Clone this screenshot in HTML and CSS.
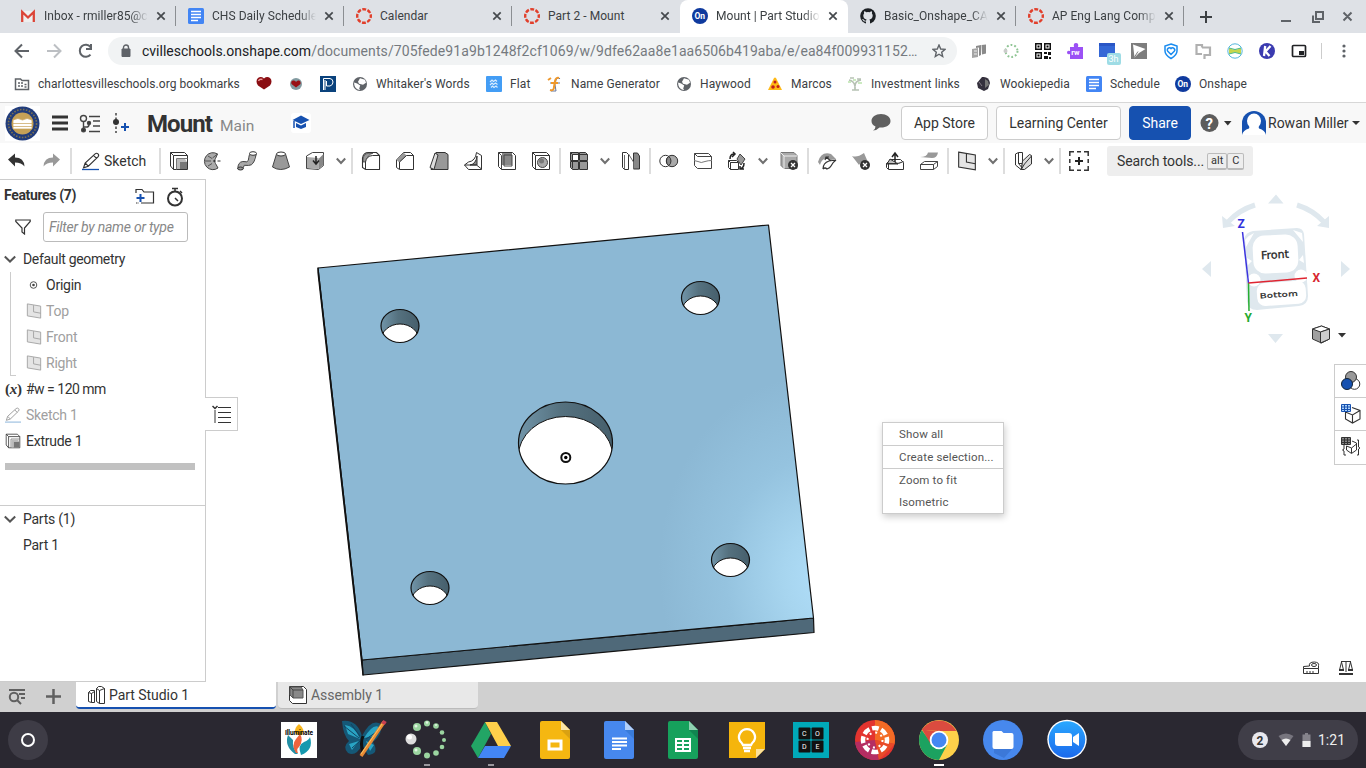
FILE: index.html
```html
<!DOCTYPE html>
<html lang="en">
<head>
<meta charset="utf-8">
<title>Mount | Part Studio 1</title>
<link rel="stylesheet" href="styles.css">
</head>
<body>
<svg class="defs" width="0" height="0">
  <defs>
    <symbol id="x" viewBox="0 0 10 10"><path d="M1.3 1.3l7.4 7.4M8.7 1.3L1.3 8.7" stroke="#45494d" stroke-width="1.7"/></symbol>
    <symbol id="canvas" viewBox="0 0 16 16"><circle cx="8" cy="8" r="6.800" fill="none" stroke="#e13f2b" stroke-width="2.400" stroke-dasharray="3.900 1.440" stroke-dashoffset="1.950"/></symbol>
    <symbol id="docs" viewBox="0 0 16 16"><rect width="16" height="16" rx="1.5" fill="#4285f4"/><path d="M3 4h10M3 7h10M3 10h10M3 13h7" transform="translate(0 -.5)" stroke="#fff" stroke-width="1.7"/></symbol>
    <symbol id="on" viewBox="0 0 16 16"><circle cx="8" cy="8" r="8" fill="#0f3a9e"/><text x="2.400" y="11" font-size="8.500" font-weight="bold" fill="#fff">On</text></symbol>
    <symbol id="globe" viewBox="0 0 16 16"><circle cx="8" cy="8" r="7" fill="#5f6368"/><path d="M2.200 6.500l3 1 3 2-1 3 1 1.500C5 14 1.700 11 2.200 6.500M8 2.200l5 1.500 1 3-3 2-4-1-1-2z" fill="#fff"/></symbol>
    <symbol id="chev" viewBox="0 0 10 8"><path d="M.8 1.500L5 6l4.200-4.500" fill="none" stroke="#707070" stroke-width="2"/></symbol>
    <symbol id="plane" viewBox="0 0 18 18"><path d="M1.500 1l15 2.500v13.500l-15-2.500z" fill="#e4e4e4" stroke="currentColor"/><path d="M8.500 2.500v7.500l8 1.500" fill="none" stroke="currentColor"/></symbol>
    <symbol id="pencil" viewBox="0 0 18 18"><path d="M1.500 15l1.500-4.500L12.500 1.800q1.400-1.200 2.700 0t0 2.800L6 13.500zM3 10.500l3 3M11 3.300l2.800 2.800" fill="none" stroke="currentColor" stroke-width="1.100"/></symbol>
    <symbol id="extrude" viewBox="0 0 20 20"><path d="M1.500 4V1.500h14l3 3v14H4.500L1.500 15z" fill="#fff" stroke="#333"/><path d="M1.500 1.500l3 3v14M4.500 4.500h14" fill="none" stroke="#333"/><path d="M7.500 7.500v11M7.500 7.500h11" stroke="#777"/><path d="M8 8l3 3v7H8zM8 8h8l2 3h-7z" fill="#bbb"/><path d="M11 11h7v7h-7z" fill="#777"/></symbol>
    <symbol id="box" viewBox="0 0 20 20"><path d="M1.500 16.500V7q1-5.500 6-5.500h8l3 3v14h-14z" fill="#fff" stroke="#333" stroke-width="1.100"/></symbol>
  </defs>
</svg>

<div class="tabs">
  <div class="tab"><svg width="16" height="16"><path d="M1 3h14v11H1z" fill="#eee"/><path d="M2.200 14V4L8 9.500 13.800 4v10" fill="none" stroke="#db4437" stroke-width="2.300"/></svg><span class="ttl fade">Inbox - rmiller85@c</span><svg class="cl"><use href="#x"/></svg></div>
  <div class="tab"><svg width="16" height="16"><use href="#docs"/></svg><span class="ttl fade">CHS Daily Schedule</span><svg class="cl"><use href="#x"/></svg></div>
  <div class="tab"><svg width="16" height="16"><use href="#canvas"/></svg><span class="ttl">Calendar</span><svg class="cl"><use href="#x"/></svg></div>
  <div class="tab nosep"><svg width="16" height="16"><use href="#canvas"/></svg><span class="ttl">Part 2 - Mount</span><svg class="cl"><use href="#x"/></svg></div>
  <div class="tab active nosep"><svg width="16" height="16"><use href="#on"/></svg><span class="ttl fade">Mount | Part Studio</span><svg class="cl"><use href="#x"/></svg></div>
  <div class="tab"><svg width="16" height="16"><circle cx="8" cy="8" r="7.800" fill="#1b1f23"/><path d="M6 16v-2.500q-2.500.5-3.200-1.500l-1-1q2 0 2.500 1.200.7.800 1.800.3l.5-1Q3.300 11 3.300 7.500q0-1.200.8-2-.4-1 .1-2.200 1 0 2.100.9a7 7 0 0 1 3.400 0q1-.9 2.100-.9.500 1.200.1 2.200.8.800.8 2 0 3.500-3.300 4 .6.500.6 1.500v3z" fill="#dee1e6"/></svg><span class="ttl fade">Basic_Onshape_CA</span><svg class="cl"><use href="#x"/></svg></div>
  <div class="tab"><svg width="16" height="16"><use href="#canvas"/></svg><span class="ttl fade">AP Eng Lang Comp</span><svg class="cl"><use href="#x"/></svg></div>
  <svg class="plus" width="12" height="12"><path d="M6 0v12M0 6h12" stroke="#3c4043" stroke-width="2"/></svg>
  <svg class="wins" width="90" height="20"><g fill="none" stroke="#5f6368" stroke-width="2"><path d="M0 14h10M35 5h7v7h-7zM32 8.500V15h7M62.500 5.500l8 8M70.500 5.500l-8 8" /></g></svg>
</div>

<div class="addr">
  <svg class="nav" width="90" height="18" fill="none" stroke-width="2"><path d="M16 9H3M9 2.500L2.500 9 9 15.500" stroke="#5f6368"/><path d="M34 9h13M41 2.500L47.500 9 41 15.500" stroke="#bcbfc3"/><path d="M77.500 12.500A6 6 0 1 1 77.500 5M78 2v5h-5" stroke="#5f6368"/></svg>
  <div class="omni"><svg width="10" height="14"><path d="M1 5h8v7.500H1z" fill="#5f6368" stroke="#5f6368"/><path d="M2.500 5V3.500a2.500 2.500 0 0 1 5 0V5" fill="none" stroke="#5f6368" stroke-width="1.400"/></svg><span class="url"><b>cvilleschools.onshape.com</b>/documents/705fede91a9b1248f2cf1069/w/9dfe62aa8e1aa6506b419aba/e/ea84f009931152…</span><svg class="star" width="14" height="14"><path d="M7 1l1.700 4 4.300.4-3.300 2.800 1 4.300L7 10.200 3.300 12.500l1-4.300L1 5.400 5.300 5z" fill="none" stroke="#5f6368" stroke-width="1.400"/></svg></div>
  <div class="exts">
    <svg viewBox="0 0 16 16"><path d="M1 6l6-1v9l-6 1z" fill="#a5a5a5"/><path d="M5 3l5-1v10l-2 1V4.500L5 5zM10.500 2l4.500-.5v9l-4 1z" fill="#8a8a8a"/><path d="M3 8h3M3 11h3" stroke="#eee"/></svg>
    <svg viewBox="0 0 16 16"><circle cx="8.500" cy="8" r="6" fill="none" stroke="#8fc594" stroke-width="2" stroke-dasharray="1.800 2"/><circle cx="2.500" cy="8" r="2" fill="#ccc"/></svg>
    <svg viewBox="0 0 16 16"><path d="M0 0h7v7H0zM9 0h7v7H9zM0 9h7v7H0zM9 9h3v2H9zM13 9h3v3h-3zM9 13h4v3H9zM14 14h2v2h-2z" fill="#111"/><path d="M1.500 1.500h4v4h-4zM10.500 1.500h4v4h-4zM1.500 10.500h4v4h-4z" fill="#fff"/><path d="M2.500 2.500h2v2h-2zM11.500 2.500h2v2h-2zM2.500 11.500h2v2h-2z"/></svg>
    <svg viewBox="0 0 16 16"><path d="M3 4h4q-1-4 2-4t2 4h5v12H3v-5q-3 1-3-1.500T3 8z" fill="#9b51f5"/><text x="4.300" y="12" font-size="7.500" font-weight="bold" fill="#fff">rw</text></svg>
    <svg viewBox="0 0 16 16"><path d="M0 0h16v3H0z" fill="#2a56c6"/><path d="M0 3h16v11H0z" fill="#3367d6"/><rect x="8" y="10" width="14" height="12" rx="2" fill="#9edce5"/><text x="9.500" y="19" font-size="9" fill="#fff">3h</text></svg>
    <svg viewBox="0 0 16 16"><path d="M0 0h16v16H0z" fill="#7d7d7d"/><path d="M2 1.500L14.500 6 8 10l-4.500 4.500z" fill="#fff"/><path d="M3.500 14L7 8.500" stroke="#7d7d7d"/></svg>
    <svg viewBox="0 0 16 16" fill="none" stroke="#1a8cf0" stroke-width="1.500"><path d="M8 1l6 2v5q0 4-6 7.500Q2 12 2 8V3z"/><path d="M8 11.500L4.800 8.300a2 2 0 1 1 3.200-2.700 2 2 0 1 1 3.200 2.700z"/></svg>
    <svg viewBox="0 0 16 16" fill="none" stroke="#b0b0b0" stroke-width="2.200"><path d="M7 4.500V2H1.500v9H7M9.500 16v-5M7 4.500h8V12H9.500"/></svg>
    <svg viewBox="0 0 16 16"><circle cx="8" cy="8" r="7.200" fill="#fff" stroke="#54b7dc"/><path d="M2 5q6 3 12 0v6q-6-3-12 0z" fill="#c6d64b"/><path d="M2 5q6 3 12 0M2 11q6-3 12 0" stroke="#4db887" fill="none"/></svg>
    <svg viewBox="0 0 16 16"><circle cx="8" cy="8" r="8" fill="#3b3bb0"/><path d="M6.200 3L5 13M11.500 3L6.500 8.500l4 4.500" stroke="#fff" stroke-width="2.300" fill="none"/></svg>
    <svg viewBox="0 0 16 16"><rect x="1.500" y="2.500" width="13" height="11" rx="1" fill="#fff" stroke="#202124" stroke-width="1.700"/><path d="M8 8h5v4H8z" fill="#202124"/></svg>
  </div>
  <i class="vr"></i>
  <svg class="dots" width="4" height="14" fill="#5f6368"><circle cx="2" cy="2" r="1.600"/><circle cx="2" cy="7" r="1.600"/><circle cx="2" cy="12" r="1.600"/></svg>
</div>

<div class="marks">
  <div class="bm"><svg viewBox="0 0 16 16"><path d="M1.500 3h5l1.500 1.500h6.500v9h-13z" fill="#fff" stroke="#5f6368" stroke-width="1.500"/><path d="M4 7h2M7 7h2M4 10h2M7 10h2M10.500 8.500h2M10.500 11h2" stroke="#5f6368" stroke-width="1.500"/></svg><span>charlottesvilleschools.org bookmarks</span></div>
  <div class="bm"><svg viewBox="0 0 16 16"><path d="M8 13.500L2 9.500Q-1 5 2 2 5 0 8 2.500 11 0 14 2q3 3 0 7.500z" fill="#8a0d12"/><path d="M2.500 5q1-2.500 4-1.500" stroke="#e99" fill="none" stroke-width="1.500"/></svg></div>
  <div class="bm"><svg viewBox="0 0 16 16"><circle cx="8" cy="8" r="6" fill="#829aa0"/><path d="M8 11.500L3.500 8q-1-3 1.500-3.500T8 6q1-2 3-1.500T12.500 8z" fill="#991015"/></svg></div>
  <div class="bm"><svg viewBox="0 0 16 16"><path d="M0 0h16v16H0z" fill="#0a427c"/><path d="M3.500 14V2.500H10q3 .5 3 3.500t-3 4H6.500V5M5 14V4" fill="none" stroke="#fff"/></svg></div>
  <div class="bm"><svg><use href="#globe"/></svg><span>Whitaker's Words</span></div>
  <div class="bm"><svg viewBox="0 0 16 16"><rect width="16" height="16" rx="1" fill="#439df5"/><g stroke="#d8ecff" fill="none" stroke-width="1.200"><path d="M4 6l2-2 1.500 1.500L9.500 4 11 5.500M4 9l2-2 1.500 1.500L9.500 7l2 1.500M5 11.500l1.500-1.500L8 11.500 10 10l1.500 1.500"/></g></svg><span>Flat</span></div>
  <div class="bm"><svg viewBox="0 0 16 16" fill="none"><path d="M4 15h5q-2-7 0-11t4-1M3 7h10" stroke="#65769e" stroke-width="1"/><path d="M3 14q4 1 4-3l1-6q1-4 4-3M1 4l3-2M4 7h7" stroke="#ee982d" stroke-width="2"/></svg><span>Name Generator</span></div>
  <div class="bm"><svg><use href="#globe"/></svg><span>Haywood</span></div>
  <div class="bm"><svg viewBox="0 0 16 16"><path d="M7 2q1-1 2 0l6 12H1z" fill="#ffb916"/><g fill="#c11c1c"><circle cx="8" cy="6" r="1.500"/><circle cx="6" cy="11" r="1.800"/><circle cx="11" cy="10.500" r="1.500"/></g></svg><span>Marcos</span></div>
  <div class="bm"><svg viewBox="0 0 16 16" fill="none"><path d="M2 4q5 1 6 6 0-5 6-6M8 8v6M3 2h4M10 3h4M5 14h7" stroke="#b7c2b4" stroke-width="1.700"/><path d="M1 6h3M11 7h4M6 4h3" stroke="#cbeac0" stroke-width="2"/></svg><span>Investment links</span></div>
  <div class="bm"><svg viewBox="0 0 16 16"><path d="M6 1q7-1 8 6l-2 6-4 2-6-3-1-5z" fill="#34303d"/><path d="M9 3l3 2 1 4-4 3z" fill="#777"/><path d="M3 6l3 4" stroke="#837b87"/></svg><span>Wookiepedia</span></div>
  <div class="bm"><svg><use href="#docs"/></svg><span>Schedule</span></div>
  <div class="bm"><svg><use href="#on"/></svg><span>Onshape</span></div>
</div>

<header class="head">
  <svg class="seal" width="35" height="35" viewBox="0 0 35 35"><path d="M0 0h35v35H0z" fill="#fff"/><circle cx="17.500" cy="17.500" r="17" fill="#213c7b"/><circle cx="17.500" cy="17.500" r="14" fill="none" stroke="#80734f" stroke-width="1.600" stroke-dasharray="1.500 1.500"/><circle cx="17.500" cy="17.500" r="11" fill="#c6a157"/><path d="M8 14q5-3 9.500 0 4.500-3 9.500 0v9H8zM8 17.500h19M8 20.500h19" fill="#fff" stroke="#c6a157" stroke-width=".7"/></svg>
  <svg class="burger" width="16" height="16"><path d="M0 2h16M0 8h16M0 14h16" stroke="#333" stroke-width="3"/></svg>
  <svg class="tree" width="22" height="20" fill="none" stroke="#444" stroke-width="1.400"><circle cx="4.500" cy="4.500" r="3"/><path d="M4.500 8v8M4.500 13h4q2-1 1.500-4"/><circle cx="4.500" cy="16" r="1.800" fill="#333"/><circle cx="10" cy="9" r="1.500" fill="#333"/><path d="M10 2.500h11M14 7h7M14 12h7M10 17.500h11"/></svg>
  <svg class="ver" width="18" height="20"><path d="M4 0v20" stroke="#444" stroke-width="1.500" stroke-dasharray="2.500 2"/><circle cx="4" cy="9" r="3" fill="#333"/><path d="M13 10v8M9 14h8" stroke="#1651b0" stroke-width="2"/></svg>
  <h1>Mount</h1><span class="main">Main</span>
  <svg class="cap" width="20" height="20"><rect width="20" height="20" rx="3" fill="#fff"/><path d="M1.500 7L10 2.500 18.500 7 10 11zM5 10l5 2.500 5-2.500v4l-5 2-5-2z" fill="#1651b0"/><path d="M3 8v7" stroke="#1651b0" stroke-width="1.500"/></svg>
  <svg class="bubble" width="20" height="18"><path d="M10 0C4.500 0 .5 3 .5 7q0 3.500 4 5.500 0 2.500-2.500 4 4-.3 6.500-3h1.500c5.500 0 9.500-2.500 9.500-6.500S15.500 0 10 0" fill="#606060"/></svg>
  <button class="b1">App Store</button><button class="b2">Learning Center</button><button class="b3">Share</button>
  <svg class="help" width="32" height="20"><circle cx="9.500" cy="10" r="9" fill="#5c5c5c"/><text x="5.500" y="15.500" font-size="15" font-weight="bold" fill="#fff">?</text><path d="M24 8h7.500l-3.700 4.500z" fill="#333"/></svg>
  <svg class="ava" width="24" height="24"><path d="M0 24V12a12 12 0 0 1 24 0v12z" fill="#1651b0"/><ellipse cx="12" cy="10" rx="7" ry="7.500" fill="#fff"/><path d="M0 24q1-5 7-6.500l1-4h8l1 4q6 1.500 7 6.500z" fill="#fff"/></svg>
  <span class="user">Rowan Miller</span><i class="car"></i>
</header>

<div class="bar">
  <svg class="t"><path d="M1 8.500l7-6v4q9 0 9.500 9-3-4-9.500-4v4z" fill="#333"/></svg>
  <svg class="t redo"><path d="M18 8.500l-7-6v4q-9 0-9.500 9 3-4 9.500-4v4z" fill="#999"/></svg>
  <i class="s"></i>
  <div class="sk"><svg width="20" height="20" viewBox="0 0 20 20"><g transform="translate(1 1) scale(1.05)" color="#333"><use href="#pencil" width="18" height="18"/></g><path d="M1 18.500h17" stroke="#1651b0" stroke-width="1.300"/></svg><span>Sketch</span></div>
  <i class="s"></i>
  <svg class="t"><use href="#extrude"/></svg>
  <svg class="t"><path d="M14.500 3A8.500 8.500 0 1 0 15 17L12.500 12.500a3.500 3.500 0 0 1 0-5z" fill="#aaa" stroke="#444"/><path d="M5 5l4 2.500M2 10h6M5 15l4-2.500M14.500 3l-5 4" stroke="#555"/><path d="M10 10h9" stroke="#333" stroke-dasharray="3 1.500"/></svg>
  <svg class="t"><path d="M.8 18q0-7 5-7.500l4 .3q2-.5 2-4.500 0-3 2.500-4.500l5 1.500q-1.500 8-5 10.500-2 1-7 .5-1 2-1.500 4z" fill="#aaa" stroke="#444"/><ellipse cx="16" cy="2.500" rx="3.500" ry="1.800" fill="#fff" stroke="#333"/><ellipse cx="3.500" cy="17.500" rx="2.700" ry="1.500" fill="#999" stroke="#333"/></svg>
  <svg class="t"><path d="M5.500 3L1.500 16q8 5 17 0L14.500 3z" fill="#999" stroke="#444"/><ellipse cx="10" cy="3" rx="4.500" ry="2" fill="#fff" stroke="#333"/></svg>
  <svg class="t"><path d="M1.500 5l6-3.500h11v13l-5 4-12-1z" fill="#fff" stroke="#444"/><path d="M2 6l11.500 1v11L2 17z" fill="#aaa"/><path d="M13.500 8l5-5v11l-5 4z" fill="#888"/><path d="M11 5v8M8 9.500l3 3.500 3-3.500" stroke="#222" stroke-width="1.500" fill="none"/></svg>
  <svg class="c"><use href="#chev"/></svg><i class="s"></i>
  <svg class="t"><use href="#box"/><path d="M2 9q0-7 7-7h3Q6 4 5 11H2z" fill="#999" stroke="#333" stroke-width=".7"/><path d="M18.500 4.500v14h-14V11q1-6 7-6.500z" fill="#fff" stroke="#333"/></svg>
  <svg class="t"><path d="M1.500 9l7-7.500h7l3 3v14H4.500l-3-2z" fill="#fff" stroke="#333"/><path d="M1.500 9l7-7.500 3 3-7 7z" fill="#999"/><path d="M4.500 18v-7l7-6.500h7" fill="none" stroke="#333"/></svg>
  <svg class="t"><path d="M7 1.500h9l3 2v15H2z" fill="#999" stroke="#333"/><path d="M6 2l3 2-4 14.500-4-2z" fill="#ddd" stroke="#333"/></svg>
  <svg class="t"><path d="M1.500 14l4-3q7-1 8-9.500l5 3v14h-13z" fill="#fff" stroke="#333"/><path d="M14 5v9h-7q6-1 7-9z" fill="#888" stroke="#333"/><path d="M1.500 14h12l5 4" fill="none" stroke="#333"/></svg>
  <svg class="t"><path d="M1.500 1.500h14l3 3v14h-14l-3-3z" fill="#fff" stroke="#333"/><path d="M5 2h10v12H5z" fill="#888"/><path d="M7 4h8v11H7zM4.500 4.500v14M1.500 1.500l3 3" fill="none" stroke="#444"/></svg>
  <svg class="t"><path d="M1.500 1.500h14l3 3v14h-14l-3-3z" fill="#fff" stroke="#333"/><path d="M1.500 1.500l3 3h14M4.500 4.500v14" fill="none" stroke="#333"/><circle cx="11.500" cy="11.500" r="5" fill="#aaa" stroke="#444"/><circle cx="10.500" cy="10" r="2.500" fill="#777"/></svg>
  <i class="s"></i>
  <svg class="t"><path d="M1.500 1.500h8v8h-8zM10.500 1.500h6l2 2v6h-8zM1.500 10.500h8v8h-6l-2-2zM10.500 10.500h8v8h-8z" fill="#999" stroke="#333"/><path d="M4 4h5v5H4z" fill="#fff"/><path d="M1.500 1.500l2 2h15M3.500 3.500v14" stroke="#333" fill="none"/></svg>
  <svg class="c"><use href="#chev"/></svg>
  <svg class="t"><path d="M1.500 1.500h4l2 2v15h-4l-2-2z" fill="#fff" stroke="#333"/><path d="M12.500 2h4l2 3v13h-6z" fill="#888" stroke="#333"/><path d="M7.500 3l5 8v7M3.500 4v14" stroke="#666" fill="none"/></svg>
  <i class="s"></i>
  <svg class="t"><circle cx="6.500" cy="10" r="5.700" fill="#fff" stroke="#333"/><circle cx="13" cy="10" r="5.700" fill="#aaa" stroke="#333"/><path d="M9.700 5.300a6 6 0 0 1 0 9.400 6 6 0 0 1 0-9.400" fill="#888" stroke="#333"/></svg>
  <svg class="t"><path d="M1.500 2.500h14l3 3v12h-14l-3-3zM1.500 2.500l3 3h14" fill="#fff" stroke="#444"/><path d="M1 9.500l4 1q3 2 7 0 3-1 7-1" fill="none" stroke="#777"/></svg>
  <svg class="t"><path d="M1.500 9.500h8l2 2v7h-8l-2-2zM1.500 9.500l2 2h8M3.500 11.500v7" fill="#fff" stroke="#333"/><path d="M13 3l5 5-4 6-4-6z" fill="#999" stroke="#444"/><path d="M3 8q0-5 4-5M6 1l2 2-3 3M17 12q0 5-4 6M13 15v3h4" fill="none" stroke="#222" stroke-width="1.500"/></svg>
  <svg class="c"><use href="#chev"/></svg>
  <svg class="t"><path d="M2 1.500h13l3 3v13H5l-3-3z" fill="#aaa" stroke="#777"/><path d="M2 2l3 3h13M5 5v13" stroke="#eee" fill="none"/><circle cx="14" cy="14" r="5" fill="#333"/><path d="M12 12l4 4M16 12l-4 4" stroke="#fff" stroke-width="1.300"/></svg>
  <i class="s"></i>
  <svg class="t"><path d="M1 11Q4 0 14 3l5 5-5 1-5-2q-5 2-6 7z" fill="#999"/><path d="M6 18q0-6 6-8l7-1q-3 2-5 6-1 2-4 3-2-2-4 0M9 6l5 4M8 9l1-3 3 0" stroke="#333" fill="none" stroke-width="1.200"/></svg>
  <svg class="t"><path d="M1 5q5 2 12-3l3 7q-5 0-8 5z" fill="#999"/><circle cx="14" cy="14" r="5" fill="#333"/><path d="M12 12l4 4M16 12l-4 4" stroke="#fff" stroke-width="1.300"/></svg>
  <svg class="t"><path d="M1.500 12.500l4-4h10l3 3v7h-15l-2-2z" fill="#fff" stroke="#333"/><path d="M5 8l8 5H2zM1.500 12.500h12l5-2M3.500 13v5" fill="#bbb" stroke="#333"/><path d="M10 11V3M7 6l3-4 3 4" fill="none" stroke="#222" stroke-width="1.500"/></svg>
  <svg class="t"><path d="M1 6q7 0 8-4.500h10Q18 7 13 7z" fill="#999"/><path d="M1.500 13.500l4-3h13v5l-4 3h-13zM1.500 13.500h13v5M14.500 13.500l4-3" fill="#fff" stroke="#444"/></svg>
  <i class="s"></i>
  <svg class="t"><g color="#333"><use href="#plane" width="20" height="20"/></g></svg>
  <svg class="c"><use href="#chev"/></svg><i class="s"></i>
  <svg class="t"><path d="M2.500 3l3-1.500h4v11l-1.500 6L2.500 14z" fill="#fff" stroke="#333"/><path d="M5.500 1.500v11l5 6h-3M5.500 12.500h4" fill="none" stroke="#333"/><path d="M9.500 10l7-6.500 2 1V13l-7 5.500h-3z" fill="#ddd" stroke="#333"/><path d="M8.500 18l3-5 7-8" fill="none" stroke="#333"/></svg>
  <svg class="c"><use href="#chev"/></svg><i class="s"></i>
  <svg class="t"><path d="M.8 5V.8H5M15 .8h4.200V5M19.200 15v4.200H15M5 19.200H.8V15M8 .8h4M8 19.200h4M.8 8v4M19.200 8v4" stroke="#333" stroke-width="1.500" fill="none"/><path d="M10 6v8M6 10h8" stroke="#222" stroke-width="2"/></svg>
  <div class="search"><span>Search tools...</span><kbd>alt</kbd><kbd>C</kbd></div>
</div>

<div class="work">
  <aside>
    <div class="fh"><b>Features (7)</b><svg width="52" height="22"><path d="M1 7V3.500h6l2 2.500h9.500v11H6" fill="none" stroke="#333" stroke-width="1.200"/><path d="M1 17h3" stroke="#333" stroke-dasharray="1.500 1"/><path d="M5.500 8v8M1.500 12h8" stroke="#1651b0" stroke-width="2"/><circle cx="40" cy="12.500" r="7" fill="none" stroke="#333" stroke-width="2"/><path d="M37 2.500h6M40 3v3M45 5l2 2M40 12l3 3" stroke="#333" stroke-width="1.500"/></svg></div>
    <div class="ff"><svg width="16" height="16"><path d="M.8 1h14.400v1.500L9.500 9v6L7 13V9L.8 2.500z" fill="none" stroke="#333" stroke-width="1.200"/></svg><div class="inp">Filter by name or type</div></div>
    <div class="row hd"><svg width="12" height="8" viewBox="0 0 12 8"><path d="M.8 1.500L6 6.500l5.200-5" fill="none" stroke="#555" stroke-width="2"/></svg><span class="dg">Default geometry</span></div>
    <div class="kids">
      <div class="row"><svg width="16" height="16"><circle cx="7.500" cy="8" r="3.300" fill="none" stroke="#555"/><circle cx="7.500" cy="8" r="1.300" fill="#444"/></svg><span>Origin</span></div>
      <div class="row dim"><svg width="16" height="16"><use href="#plane"/></svg><span>Top</span></div>
      <div class="row dim"><svg width="16" height="16"><use href="#plane"/></svg><span>Front</span></div>
      <div class="row dim"><svg width="16" height="16"><use href="#plane"/></svg><span>Right</span></div>
    </div>
    <div class="row ft"><em class="var">(<i>x</i>)</em><span class="wv">#w = 120 mm</span></div>
    <div class="row ft dim"><svg width="16" height="16" viewBox="0 0 18 18"><use href="#pencil"/><path d="M0 17h18" stroke="#a9c8e4" stroke-width="1.500"/></svg><span>Sketch 1</span></div>
    <div class="row ft"><svg width="16" height="16" viewBox="0 0 20 20"><use href="#extrude"/></svg><span>Extrude 1</span></div>
    <div class="rb"></div>
    <div class="parts"><div class="row hd"><svg width="12" height="8" viewBox="0 0 12 8"><path d="M.8 1.500L6 6.500l5.200-5" fill="none" stroke="#555" stroke-width="2"/></svg><span>Parts (1)</span></div><div class="row p1"><span>Part 1</span></div></div>
  </aside>
  <div class="view">
    <svg class="model" width="1160" height="503" viewBox="206 179 1160 503">
      <defs>
        <linearGradient id="wall"><stop offset="0" stop-color="#7195a9"/><stop offset=".45" stop-color="#55717f"/><stop offset="1" stop-color="#465f6c"/></linearGradient>
        <radialGradient id="shine" gradientUnits="userSpaceOnUse" cx="0" cy="0" r="1" gradientTransform="translate(825 580) rotate(-8) scale(165 205)"><stop offset="0" stop-color="#b0def9"/><stop offset=".25" stop-color="#a7d5ef"/><stop offset=".6" stop-color="#95c3df"/><stop offset="1" stop-color="#8cb8d4"/></radialGradient>
        <clipPath id="hs"><ellipse rx="19" ry="16.500"/></clipPath><clipPath id="hb"><ellipse rx="47" ry="41"/></clipPath>
        <g id="hole"><ellipse rx="19" ry="16.500" fill="url(#wall)"/><g clip-path="url(#hs)"><ellipse cy="14.500" rx="19" ry="16.500" fill="#fff" stroke="#111"/></g><ellipse rx="19" ry="16.500" fill="none" stroke="#111" stroke-width="1.200"/></g>
      </defs>
      <g stroke="#111" stroke-width="1.200" stroke-linejoin="round"><path d="M362 660l451.500-42 .5 14.500L363 675z" fill="#4f6979"/><path d="M318 268l450.500-43 45 393L362 660z" fill="url(#shine)"/><path d="M318 268l44 392 1 15-45-402z" fill="#222"/></g>
      <use href="#hole" x="400" y="326"/><use href="#hole" x="700.500" y="298"/><use href="#hole" x="430" y="588"/><use href="#hole" x="730.500" y="560"/>
      <g transform="translate(565.500 443)"><ellipse rx="47" ry="41" fill="url(#wall)"/><g clip-path="url(#hb)"><ellipse cy="14.500" rx="47.500" ry="41" fill="#fff" stroke="#111"/></g><ellipse rx="47" ry="41" fill="none" stroke="#111" stroke-width="1.200"/></g>
      <circle cx="565.800" cy="457.500" r="4.500" fill="#fff" stroke="#111" stroke-width="2"/><circle cx="565.800" cy="457.500" r="1.700"/>
      <g fill="#dfe8ee"><path d="M1268 203.500l8-9 7.500 9zM1268 334h15l-7.500 9zM1211 261v16l-9-8zM1341 261v16l9-8zM1222 216l1 12 12-2zM1329 216v12l-12-2z"/><path d="M1228 222q11-12 27-17M1324 222q-11-12-27-17" fill="none" stroke="#dfe8ee" stroke-width="5"/>
      <path d="M1244 239q2-7 9-8l44-3q6 0 7 6l4 62q0 9-9 10l-42 4q-9 0-10-9z"/></g>
      <g fill="#fff"><rect x="1253" y="235" width="45" height="38" rx="12" transform="rotate(-3 1275 254)"/><rect x="1257" y="282" width="49" height="23" rx="8" transform="rotate(-4 1280 294)"/><circle cx="1254" cy="280" r="6.500"/><circle cx="1301" cy="276" r="6.500"/><path d="M1245 240q4-5 9-7l-8 14zM1293 230l9 3 1 9zM1247 258l5 3-4 4zM1303 255l-4 5 5 3z"/></g>
      <path d="M1248.500 283l-6-51" stroke="#3b33df" stroke-width="1.500"/><path d="M1248.500 283l.5 28" stroke="#26ae31" stroke-width="1.500"/><path d="M1248.500 283l58.500-5" stroke="#df2531" stroke-width="1.500"/>
      <g class="cube" fill="#222"><text x="1261" y="258.500" font-size="11" stroke="#222" stroke-width=".3" transform="rotate(-3 1275 255)" textLength="28">Front</text><text font-size="10" stroke="#222" stroke-width=".3" transform="translate(1260 298.500) rotate(-4) scale(1 .7)" textLength="38">Bottom</text></g>
      <g font-size="12" font-weight="bold"><text x="1237.500" y="228" fill="#3030dc">Z</text><text x="1312.500" y="281.500" fill="#d8262f">X</text><text x="1244.500" y="321.500" fill="#25a92d">Y</text></g>
      <g stroke="#333"><path d="M1312.500 329l9-3 8 3v10l-8 4-9-4z" fill="#a0a0a0"/><path d="M1312.500 329l9-3 8 3-9 3z" fill="#fff"/><path d="M1320.500 332l9-3v10l-9 4z" fill="#ccc"/></g><path d="M1338 333h8l-4 4.500z" fill="#333"/>
      <g fill="none" stroke="#333"><path d="M1303.500 668.500h15v-3q1-3-4-3.500-6 0-5 4l-6 .5zM1303.500 668.500v5h15v-5M1307 671v2M1310 671v2M1313 671v2"/><ellipse cx="1314" cy="665" rx="2.500" ry="1.500"/><path d="M1341 661.500h10M1346 661v11M1341.500 662l-2 8M1341.500 662l2 8M1350.500 662l-2 8M1350.500 662l2 8"/><path d="M1339 670h5M1348 670h5M1339 674h14" stroke-width="2"/></g>
    </svg>
    <div class="flist"><svg width="19" height="19"><path d="M6 2.500h13M6 7.500h13M6 12.500h13M6 17.500h13" stroke="#333" stroke-width="1.200"/><path d="M3 5v13" stroke="#999" stroke-width="2"/><path d="M.5 1L3 3.500 5.500 1" fill="none" stroke="#333" stroke-width="1.500"/></svg></div>
    <div class="menu"><div>Show all</div><div>Create selection...</div><div>Zoom to fit</div><div>Isometric</div></div>
    <div class="side">
      <div><svg width="20" height="20"><circle cx="13.500" cy="13" r="5.300" fill="#fff" stroke="#333"/><circle cx="10" cy="6" r="5.500" fill="#999" stroke="#333"/><circle cx="6" cy="13" r="5.500" fill="#1651b0" stroke="#123"/></svg></div>
      <div><svg width="20" height="20"><path d="M11 3.500l8 3v8.500l-7.500 4-7-4V8l7 3 7.500-4.500M11.500 11v8" fill="none" stroke="#333" stroke-width="1.100"/><path d="M.5.500h9v7h-9z" fill="#acd3fa" stroke="#1651b0"/><path d="M3.500 0v8M6.500 0v8M0 3h10M0 5.500h10" stroke="#1651b0"/></svg></div>
      <div><svg width="20" height="20"><path d="M11 4l4.500 2v7l-5 3.500-5-3.500V9l5 2 5-4M10.500 11v5M3 8v4l-1.500 1L3 14v4h2M16 3h1.500v7l1.500 1-1.500 1v6H16" fill="none" stroke="#333"/><path d="M.5.500h9v7h-9z" fill="#888" stroke="#333"/><path d="M3.500 0v8M6.500 0v8M0 3h10M0 5.500h10" stroke="#333"/></svg></div>
    </div>
  </div>
</div>

<div class="btabs">
  <svg width="76" height="30" fill="none" stroke="#606060"><path d="M9 8h16M19 12h6M21 16h4" stroke-width="2"/><circle cx="14" cy="15" r="4.200" stroke-width="2"/><path d="M17 18l4 4" stroke-width="2"/><path d="M53.500 7v15M46 14.500h15" stroke-width="2.500"/></svg>
  <div class="bt on"><svg width="20" height="20" fill="#fff" stroke="#333"><path d="M2.500 7.500l2-2h4v12h-3l-3-1zM2.500 7.500l3 1 3-2M5.500 8.500v9M10.500 3.500l2-2h3l3 2v15h-5l-3-2zM10.500 3.500l3 2 5-2M13.500 5.500v13"/></svg><span>Part Studio 1</span></div>
  <div class="bt"><svg width="20" height="20"><path d="M1.500 1.500h14l3 3v14h-14l-3-3z" fill="#fff" stroke="#333"/><path d="M2 2h11l2 3v8H5l-3-3z" fill="#888" stroke="#555"/><path d="M2 2l3 3h10M5 5v8" fill="none" stroke="#444"/></svg><span>Assembly 1</span></div>
</div>

<footer class="shelf">
  <div class="launch"><svg width="40" height="40"><circle cx="20" cy="20" r="20" fill="#3e3c46"/><circle cx="20" cy="20" r="6" fill="none" stroke="#fff" stroke-width="2"/></svg></div>
  <div class="apps">
    <svg viewBox="0 0 48 48"><path d="M6 6h36v36H6z" fill="#fff"/><path d="M24 8q7 6 3 11-5 1-7-2-1-5 4-9" fill="#f8b51e"/><path d="M20 38q-11-8-7-19l5 5q-1 8 5 14" fill="#238fa5"/><path d="M21 37q-5-8 0-14l4-5q4 6-1 13-3 2-1 6" fill="#ed633d"/><path d="M26 39q-4-10 3-13 5-2 6-5 4 13-9 18" fill="#1598ae"/><text x="10" y="18.500" font-size="6.500" font-weight="bold" textLength="28">Illuminate</text></svg>
    <svg viewBox="0 0 48 48"><path d="M3 5q15-2 20 15Q32 2 42 8q2 10-8 18 7 12-5 13l-6-10q-6 12-14 8-6-6 1-12Q4 19 3 5" fill="#155877"/><path d="M6 9q10 1 15 14L9 18zM25 22Q34 7 40 11l-5 9zM10 28l10-3-7 9zM27 25l8 4-4 6z" fill="#29a4c4"/><path d="M5 10l15 12M12 8l9 12M39 15l-12 8M13 32l8-7" stroke="#124361"/><path d="M24 20q-3 7 0 16" stroke="#111" stroke-width="3" fill="none"/><path d="M45 6L22 40" stroke="#e98b35" stroke-width="3.500"/><path d="M46 5L44 8" stroke="#c83f52" stroke-width="4"/><path d="M43 8L22 38" stroke="#f9c765"/></svg>
    <svg viewBox="0 0 48 48" fill="#9bd5a0"><circle cx="8" cy="23" r="5.500" fill="#ddd"/><circle cx="14" cy="11" r="4"/><circle cx="24" cy="7.500" r="3"/><circle cx="33" cy="10" r="2.800"/><circle cx="39" cy="16.500" r="2.300"/><circle cx="41" cy="24" r="2"/><circle cx="39" cy="31" r="2.300"/><circle cx="33" cy="37" r="2.800"/><circle cx="24" cy="39.500" r="3"/><circle cx="14" cy="35" r="4"/><g fill="#e2f5e3"><circle cx="13" cy="10" r="1.500"/><circle cx="24" cy="6.500" r="1.200"/><circle cx="33" cy="9" r="1"/><circle cx="13" cy="34" r="1.500"/><circle cx="6.500" cy="21" r="2.500" fill="#fff"/></g><path d="M21 48h6v2h-6z" fill="#99979d"/></svg>
    <svg viewBox="0 0 48 48"><path d="M18 6L4 30l7 12 13-24z" fill="#22a565"/><path d="M18 6h12l14 24H31z" fill="#ffd04b"/><path d="M11 42l7-12h26l-7 12z" fill="#4386f5"/><path d="M21 48h6v2h-6z" fill="#99979d"/></svg>
    <svg viewBox="0 0 48 48"><path d="M11 5h19l9 9v27q0 2-2 2H11q-2 0-2-2V7q0-2 2-2" fill="#f5b711"/><path d="M30 5v9h9z" fill="#fbe6a7"/><path d="M30 14h9v9z" fill="#d9a112"/><path d="M18 25h12v8H18z" fill="none" stroke="#fff" stroke-width="3"/></svg>
    <svg viewBox="0 0 48 48"><path d="M11 5h19l9 9v27q0 2-2 2H11q-2 0-2-2V7q0-2 2-2" fill="#4788ee"/><path d="M30 5v9h9z" fill="#b2cff8"/><path d="M30 14h9v9z" fill="#397bd9"/><path d="M17 22.500h15M17 26h15M17 29.500h15M17 33h9" stroke="#fff" stroke-width="1.800"/></svg>
    <svg viewBox="0 0 48 48"><path d="M11 5h19l9 9v27q0 2-2 2H11q-2 0-2-2V7q0-2 2-2" fill="#16a15c"/><path d="M30 5v9h9z" fill="#8ed1b1"/><path d="M30 14h9v9z" fill="#108550"/><path d="M17 23h14v12H17zM17 27h14M17 31h14M24 23v12" fill="none" stroke="#fff" stroke-width="2"/></svg>
    <svg viewBox="0 0 48 48"><path d="M6 6h36v27l-9 9H6z" fill="#f5b50c"/><path d="M33 42v-9h9z" fill="#fce19a"/><path d="M20 29q-1-2-3-4a8 8 0 1 1 14 0q-2 2-3 4zM20 32h8M21 35h6" fill="none" stroke="#fff" stroke-width="2.300"/></svg>
    <svg viewBox="0 0 48 48"><path d="M6 6h36v36H6z" fill="#00a9b9"/><g fill="#111"><rect x="11.500" y="11.500" width="12" height="12" rx="1"/><rect x="24.500" y="11.500" width="12" height="12" rx="1"/><rect x="11.500" y="24.500" width="12" height="12" rx="1"/><rect x="24.500" y="24.500" width="12" height="12" rx="1"/></g><g fill="#fff" font-size="7"><text x="15" y="20">C</text><text x="28" y="20">O</text><text x="15" y="33">D</text><text x="28.500" y="33">E</text></g></svg>
    <svg viewBox="0 0 48 48"><clipPath id="cc"><circle cx="24" cy="24" r="20"/></clipPath><g clip-path="url(#cc)"><path d="M4 4h40v40H4z" fill="#e3342f"/><path d="M24 4h20v24L24 24z" fill="#f36b25"/><path d="M4 26l20-2 4 20H4z" fill="#b42d62"/><path d="M24 24l20 4-16 16z" fill="#e94b28"/></g><circle cx="24" cy="24" r="12" fill="none" stroke="#fff" stroke-width="4.500" stroke-dasharray="6.800 2.625" stroke-dashoffset="3.400"/><circle cx="24" cy="24" r="7.500" fill="none" stroke="#fff" stroke-width="2" stroke-dasharray="2 3.890"/></svg>
    <svg viewBox="0 0 48 48"><circle cx="24" cy="24" r="20" fill="#fed04a"/><path d="M24 15L6.700 14A20 20 0 0 1 41.300 15z" fill="#db4b3f"/><path d="M6.700 14A20 20 0 0 0 24 44l8-15-8-5-9 1z" fill="#1ca260"/><path d="M7 13.500l9 15 6-13z" fill="#db4b3f"/><circle cx="24" cy="24" r="9.300" fill="#fff"/><circle cx="24" cy="24" r="7.500" fill="#4487f2"/><path d="M19 48h10v2H19z" fill="#fff"/></svg>
    <svg viewBox="0 0 48 48"><circle cx="24" cy="24" r="20" fill="#4788ed"/><path d="M15 32h19l-9 10-10-5z" fill="#3c78d8"/><path d="M14.500 15h8l2 2h8q2 0 2 2v12q0 2-2 2h-17q-2 0-2-2V16z" fill="#fff"/></svg>
    <svg viewBox="0 0 48 48"><linearGradient id="zg" x2="0" y2="1"><stop stop-color="#2aa8ff"/><stop offset="1" stop-color="#1b69ec"/></linearGradient><circle cx="24" cy="23.500" r="19.700" fill="#fff"/><circle cx="24" cy="23.500" r="18.300" fill="url(#zg)"/><path d="M12 17h14q3 0 3 3v10H15q-3 0-3-3zM30 21l6-4v13l-6-4z" fill="#fff"/></svg>
  </div>
  <div class="tray"><svg width="66" height="20"><circle cx="8" cy="10" r="8" fill="#e8e8ee"/><text x="4.600" y="14.500" font-size="12" font-weight="bold" fill="#333">2</text><path d="M34 16L26.500 6q7.500-5 15 0z" fill="#77757e"/><path d="M34 16l-4.500-6q4.500-3 9 0z" fill="#eee"/><path d="M53 3h3v1.500h2.500V17h-8V4.500H53z" fill="#85838b"/><path d="M50.500 11h8v6h-8z" fill="#eee"/></svg><span>1:21</span></div>
</footer>
</body>
</html>
```
FILE: styles.css
```css
* { box-sizing: border-box; }
body { margin: 0; width: 1366px; height: 768px; overflow: hidden; display: flex; flex-direction: column; background: #fff; font: 14px Roboto, sans-serif; color: #333; white-space: nowrap; }
svg { flex: none; display: block; font-family: Roboto, sans-serif; }
.defs { display: none; }

.tabs { height: 33px; background: #dee1e6; display: flex; align-items: center; padding-left: 8px; flex: none; }
.tab { width: 168px; height: 33px; display: flex; align-items: center; padding: 0 10px 1px 12px; flex: none; color: #3c4043; font-size: 12px; letter-spacing: .04px; background: linear-gradient(#8b8e92, #8b8e92) right 6px / 1px 20px no-repeat; }
.tab.nosep { background: none; }
.tab.active { background: #fff; border-radius: 8px 8px 0 0; }
.ttl { width: 107px; margin-left: 8px; overflow: hidden; }
.fade { -webkit-mask-image: linear-gradient(90deg, #000 82%, transparent 98%); mask-image: linear-gradient(90deg, #000 82%, transparent 98%); }
.cl { width: 10px; height: 10px; margin-left: 6px; }
.plus { margin-left: 16px; }
.wins { margin-left: 69px; }

.addr { height: 35px; display: flex; align-items: center; flex: none; padding-left: 13px; }
.nav { margin-right: 5px; }
.omni { width: 849px; height: 28px; border-radius: 14px; background: #f1f3f4; display: flex; align-items: center; padding-left: 13px; }
.url { width: 778px; margin-left: 11px; color: #757a7f; letter-spacing: .08px; }
.url b { font-weight: 400; color: #202124; letter-spacing: 0; }
.star { margin-left: 12px; }
.exts { display: flex; gap: 16px; margin-left: 14px; }
.exts svg { width: 16px; height: 16px; overflow: visible; }
.vr { width: 1px; height: 16px; background: #ccc; margin-left: 14px; }
.dots { margin-left: 20px; }

.marks { height: 35px; display: grid; align-items: center; flex: none; border-bottom: 1px solid #d7d7d7; padding: 0 0 2px 14px; grid-template-columns: 242px 32px 32px 32px 134px 61px 129px 91px 80px 129px 110px 89px 90px; font-size: 12px; letter-spacing: .1px; color: #3c4043; }
.bm:first-child { letter-spacing: .05px; }
.bm { display: flex; align-items: center; gap: 8px; }
.bm svg { width: 16px; height: 16px; }

.head { height: 40px; background: #f8f8f8; display: flex; align-items: center; flex: none; padding-left: 5px; }
.burger { margin-left: 12px; }
.tree { margin-left: 11px; transform: translateY(1px); }
.ver { margin-left: 11px; }
h1 { font-size: 24px; font-weight: 700; letter-spacing: -.9px; margin: 2px 0 0 17px; width: 73px; }
.main { font-size: 15.500px; color: #888; padding-top: 6px; width: 71px; }
.cap { margin-right: 560px; }
button { height: 34px; padding: 0; border: 1px solid #ccc; border-radius: 4px; background: #fff; font: 14px Roboto, sans-serif; color: #333; margin-left: 8px; }
.b1 { width: 87px; margin-left: 10px; }
.b2 { width: 125px; }
.b3 { width: 62px; background: #1651b0; border-color: #1651b0; color: #fff; }
.help { margin-left: 9px; }
.ava { margin-left: 10px; }
.user { margin-left: 2px; width: 84px; }
.car { border: 4px solid transparent; border-top: 4.500px solid #333; border-bottom: 0; }

.bar { height: 36px; display: flex; align-items: center; flex: none; }
.t { width: 20px; height: 20px; margin: 0 7px; }
.redo { margin-left: 8px; }
.c { width: 10px; height: 8px; margin: 0 4px; }
.s { width: 2px; height: 26px; background: #ddd; margin: 0 1px; }
.sk { width: 86px; display: flex; align-items: center; padding-left: 8px; gap: 3px; }
.sk + .s { margin: 0 1px 0 0; }
.search { margin-left: 11px; width: 146px; height: 30px; border-radius: 3px; background: #eee; display: flex; align-items: center; padding-left: 10px; }
.search span { width: 90px; letter-spacing: -.1px; }
kbd { font: 11px/14px Roboto, sans-serif; border: 1px solid #bbb; border-bottom-width: 2px; border-radius: 2px; padding: 0 3px; }
kbd + kbd { padding: 0 4px; }

.work { display: flex; height: 503px; flex: none; }
aside { width: 206px; border: 1px solid #ccc; border-left: 0; flex: none; letter-spacing: -.25px; }
.dg { letter-spacing: -.33px; }
.wv { letter-spacing: -.5px; }
.fh { height: 30px; display: flex; align-items: center; padding-left: 4px; }
.fh b { width: 131px; font-weight: 700; letter-spacing: -.35px; }
.fh svg { margin-top: 4px; }
.ff { display: flex; align-items: center; height: 34px; padding-left: 15px; }
.inp { margin-left: 12px; width: 145px; height: 30px; border: 1px solid #bbb; border-radius: 3px; font: italic 14px/28px Roboto, sans-serif; color: #888; padding-left: 5px; }
.row { height: 26px; display: flex; align-items: center; }
.hd { padding-left: 4px; gap: 7px; margin-top: 2px; }
.kids { margin-left: 10px; border-left: 1px solid #ccc; background: linear-gradient(#ccc, #ccc) left bottom / 5px 1px no-repeat; }
.kids .row { padding-left: 15px; gap: 4px; }
.dim { color: #a0a0a0; }
.ft { padding-left: 5px; gap: 5px; }
.var { width: 17px; margin-right: -1px; font: bold 15px "Liberation Serif", serif; }
.rb { height: 7px; background: #c1c1c1; margin: 9px 10px 0 5px; }
.parts { margin-top: 35px; border-top: 1px solid #ccc; }
.parts .hd { margin-top: 0; }
.p1 { padding-left: 23px; }

.view { position: relative; width: 1160px; }
.cube { font-family: "DejaVu Sans", sans-serif; }
.flist { position: absolute; left: -1px; top: 218px; width: 33px; height: 34px; border: 1px solid #ccc; border-left: 0; background: #fff; padding: 7px 0 0 7px; }
.menu { position: absolute; left: 676px; top: 243px; width: 122px; height: 92px; background: #fff; border: 1px solid #ccc; box-shadow: 1px 3px 7px #0003; font-size: 11.500px; letter-spacing: .15px; line-height: 22px; color: #555; }
.menu div { height: 23px; padding-left: 16px; border-bottom: 1px solid #ccc; }
.menu div:nth-child(n+3) { border: 0; height: 22px; }
.side { position: absolute; right: 0; top: 185px; width: 32px; border: 1px solid #ccc; border-right: 0; background: #fff; }
.side div { height: 33px; padding: 6px 0 0 6px; border-bottom: 1px solid #ccc; }
.side div:last-child { border: 0; }

.btabs { height: 30px; background: #d0d0d0; display: flex; flex: none; }
.bt { width: 200px; height: 27px; background: #e8e8e8; border-radius: 0 0 4px 4px; display: flex; align-items: center; gap: 3px; padding-left: 10px; color: #666; margin-left: 2px; border-bottom: 1px solid #bbb; letter-spacing: -.05px; }
.bt.on { background: #fff; color: #333; border-bottom: 2px solid #1651b0; margin-left: 0; }

.shelf { height: 56px; background: #2a2831; display: flex; align-items: center; flex: none; }
.launch { width: 275px; padding-left: 8px; }
.apps { display: flex; gap: 16px; }
.apps svg { width: 48px; height: 48px; overflow: visible; }
.tray { width: 120px; height: 40px; border-radius: 20px; background: #403e48; margin-left: 147px; color: #eee; display: flex; align-items: center; padding-left: 14px; }
```
